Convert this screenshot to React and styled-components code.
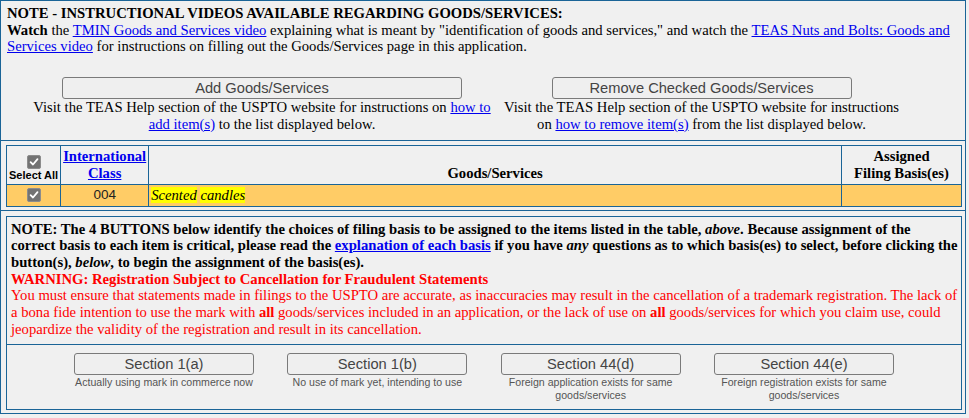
import React from "react";
import styled, { createGlobalStyle } from "styled-components";

const BLUE = "#1a6497";

const GlobalStyle = createGlobalStyle`
  html, body { margin: 0; padding: 0; background: #f0f0f0; }
  body {
    font-family: "Liberation Serif", "Times New Roman", serif;
    font-size: 14.667px;
    line-height: 16.67px;
    color: #000;
  }
  * { box-sizing: border-box; }
`;

const Frame = styled.div`
  width: 966px;
  border: 1px solid ${BLUE};
`;

const Section = styled.div`
  padding: ${(p) => p.$pad};
  & + & { border-top: 1px solid ${BLUE}; }
`;

const Para = styled.div`
  margin: 0;
`;

const Link = styled.a`
  color: #0000ee;
  text-decoration: underline;
  cursor: pointer;
`;

const ActionRow = styled.div`
  display: flex;
  gap: 3px;
  margin-top: 22px;
  padding-left: 20px;
`;

const ActionCol = styled.div`
  width: ${(p) => p.$w}px;
  display: flex;
  flex-direction: column;
  align-items: center;
  text-align: center;
`;

const GrayButton = styled.button`
  width: ${(p) => p.$w}px;
  height: 22px;
  padding: 0;
  margin: 0 0 ${(p) => p.$mb || 0}px;
  border: 1px solid #7a7a7a;
  border-radius: 3px;
  background: #efefef;
  color: #444;
  font-family: "Liberation Sans", Arial, sans-serif;
  font-size: 14.667px;
  line-height: 20px;
`;

const HelpText = styled.div`
  line-height: 16.67px;
`;

const GoodsTable = styled.table`
  width: 956px;
  border-collapse: collapse;
  border: 1px solid ${BLUE};
`;

const HeadCell = styled.th`
  width: ${(p) => p.$w}px;
  border: 1px solid ${BLUE};
  background: #f0f0f0;
  padding: 2px 2px 2px;
  vertical-align: bottom;
  text-align: center;
  font-weight: bold;
`;

const Cell = styled.td`
  border: 1px solid ${BLUE};
  background: #ffcc66;
  height: 22px;
  padding: 1px 2px;
  text-align: ${(p) => p.$align || "left"};
  vertical-align: middle;
`;

const ClassNum = styled.span`
  font-family: "Liberation Sans", Arial, sans-serif;
  font-size: 13.5px;
  color: #222;
`;

const CheckBox = styled.span`
  display: block;
  width: 14px;
  height: 14px;
  margin: 0 auto;
  border-radius: 2px;
  background: #737373;
  border: 1px solid #8c8c8c;
  position: relative;
  svg { position: absolute; left: 1px; top: 1px; }
`;

const SelectLabel = styled.div`
  font-family: "Liberation Sans", Arial, sans-serif;
  font-weight: bold;
  font-size: 11px;
  line-height: 13px;
  white-space: nowrap;
`;

const Highlight = styled.span`
  background: #ffff00;
  font-style: italic;
`;

const Panel = styled.div`
  width: 956px;
  border: 1px solid ${BLUE};
`;

const NotePart = styled.div`
  padding: 4px 3px 7px 4px;
`;

const Strong = styled.div`
  font-weight: bold;
`;

const Warning = styled.div`
  color: #ff0000;
  font-weight: ${(p) => (p.$bold ? "bold" : "normal")};
`;

const BasisRow = styled.div`
  border-top: 1px solid ${BLUE};
  display: flex;
  justify-content: center;
  gap: 33.33px;
  padding: 8px 0 7px;
`;

const BasisCol = styled.div`
  width: 180px;
  display: flex;
  flex-direction: column;
  align-items: center;
  text-align: center;
`;

const Caption = styled.div`
  margin-top: 1px;
  font-family: "Liberation Sans", Arial, sans-serif;
  font-size: 10.6px;
  line-height: 12.7px;
  color: #555;
`;

const Check = () => (
  <svg width="10" height="10" viewBox="0 0 10 10">
    <path d="M1.6 5.2 L4 7.5 L8.5 2.2" stroke="#fff" strokeWidth="1.8" fill="none" strokeLinecap="round" strokeLinejoin="round" />
  </svg>
);

const bases = [
  { label: "Section 1(a)", caption: "Actually using mark in commerce now" },
  { label: "Section 1(b)", caption: "No use of mark yet, intending to use" },
  { label: "Section 44(d)", caption: "Foreign application exists for same goods/services" },
  { label: "Section 44(e)", caption: "Foreign registration exists for same goods/services" },
];

export default function App() {
  return (
    <>
      <GlobalStyle />
      <Frame>
        <Section $pad="4px 6px 8px 6px">
          <Para>
            <b>NOTE - INSTRUCTIONAL VIDEOS AVAILABLE REGARDING GOODS/SERVICES:</b>
          </Para>
          <Para>
            <b>Watch</b> the <Link>TMIN Goods and Services video</Link> explaining what is meant by
            "identification of goods and services," and watch the{" "}
            <Link>TEAS Nuts and Bolts: Goods and Services video</Link> for instructions on filling out
            the Goods/Services page in this application.
          </Para>
          <ActionRow>
            <ActionCol $w={470}>
              <GrayButton $w={400}>Add Goods/Services</GrayButton>
              <HelpText>
                Visit the TEAS Help section of the USPTO website for instructions on{" "}
                <Link>how to add item(s)</Link> to the list displayed below.
              </HelpText>
            </ActionCol>
            <ActionCol $w={403}>
              <GrayButton $w={300}>Remove Checked Goods/Services</GrayButton>
              <HelpText>
                Visit the TEAS Help section of the USPTO website for instructions on{" "}
                <Link>how to remove item(s)</Link> from the list displayed below.
              </HelpText>
            </ActionCol>
          </ActionRow>
        </Section>

        <Section $pad="4px 3px 3px 5px">
          <GoodsTable>
            <thead>
              <tr>
                <HeadCell $w={54}>
                  <CheckBox><Check /></CheckBox>
                  <SelectLabel>Select All</SelectLabel>
                </HeadCell>
                <HeadCell $w={88}>
                  <Link>International Class</Link>
                </HeadCell>
                <HeadCell>Goods/Services</HeadCell>
                <HeadCell $w={120}>
                  Assigned
                  <br />
                  Filing Basis(es)
                </HeadCell>
              </tr>
            </thead>
            <tbody>
              <tr>
                <Cell $align="center">
                  <CheckBox><Check /></CheckBox>
                </Cell>
                <Cell $align="center">
                  <ClassNum>004</ClassNum>
                </Cell>
                <Cell>
                  <Highlight>Scented</Highlight> <Highlight>candles</Highlight>
                </Cell>
                <Cell />
              </tr>
            </tbody>
          </GoodsTable>
        </Section>

        <Section $pad="5px 3px 3px 5px">
          <Panel>
            <NotePart>
              <Strong>
                NOTE: The 4 BUTTONS below identify the choices of filing basis to be assigned to the items
                listed in the table, <i>above</i>. Because assignment of the correct basis to each item is
                critical, please read the <Link>explanation of each basis</Link> if you have <i>any</i>{" "}
                questions as to which basis(es) to select, before clicking the button(s), <i>below</i>, to
                begin the assignment of the basis(es).
              </Strong>
              <Warning $bold>WARNING: Registration Subject to Cancellation for Fraudulent Statements</Warning>
              <Warning>
                You must ensure that statements made in filings to the USPTO are accurate, as inaccuracies
                may result in the cancellation of a trademark registration. The lack of a bona fide intention
                to use the mark with <b>all</b> goods/services included in an application, or the lack of use
                on <b>all</b> goods/services for which you claim use, could jeopardize the validity of the
                registration and result in its cancellation.
              </Warning>
            </NotePart>
            <BasisRow>
              {bases.map((b) => (
                <BasisCol key={b.label}>
                  <GrayButton $w={180}>{b.label}</GrayButton>
                  <Caption>{b.caption}</Caption>
                </BasisCol>
              ))}
            </BasisRow>
          </Panel>
        </Section>
      </Frame>
    </>
  );
}
